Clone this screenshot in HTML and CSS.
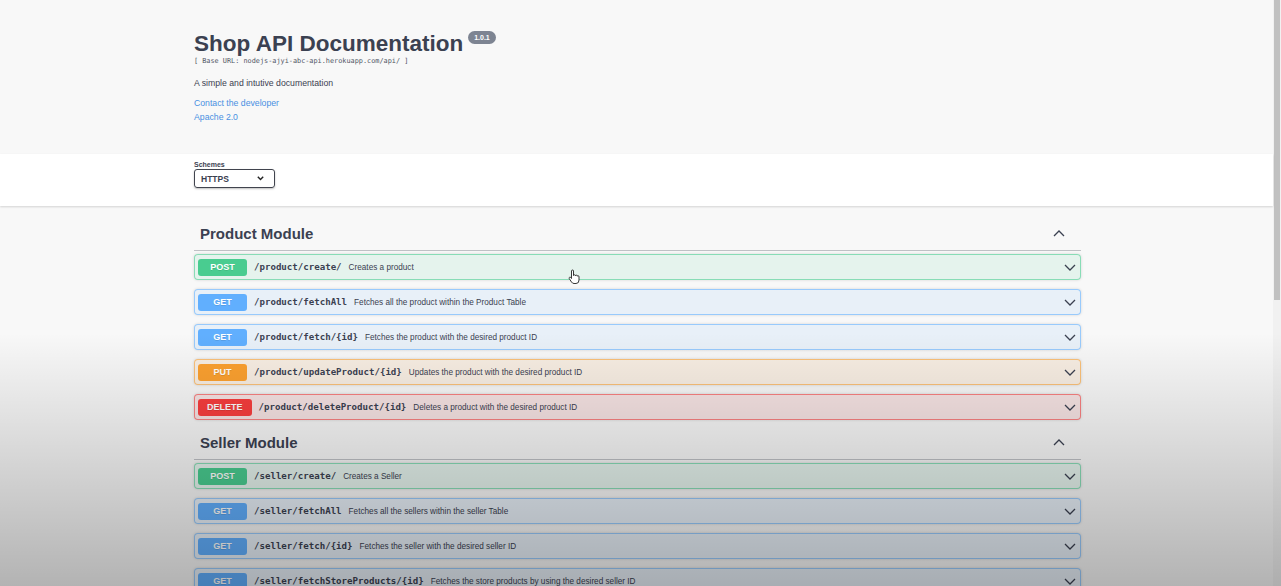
FILE: index.html
```html
<!DOCTYPE html>
<html>
<head>
<meta charset="utf-8">
<link rel="stylesheet" href="styles.css">
</head>
<body>
<div class="page">
  <section class="info">
    <div class="wrap">
      <h1 class="title">Shop API Documentation<span class="version">1.0.1</span></h1>
      <div class="base">[ Base URL: nodejs-ajyi-abc-api.herokuapp.com/api/ ]</div>
      <p class="desc">A simple and intutive documentation</p>
      <a class="link first">Contact the developer</a>
      <a class="link">Apache 2.0</a>
    </div>
  </section>

  <section class="schemes">
    <div class="wrap">
      <div class="schemes-label">Schemes</div>
      <div class="select"><span>HTTPS</span>
        <svg class="sel-chev" width="7" height="5" viewBox="0 0 7 5"><polyline points="0.8,0.8 3.5,3.6 6.2,0.8" fill="none" stroke="#222" stroke-width="1.4"/></svg>
      </div>
    </div>
  </section>

  <main class="content">
    <div class="wrap">
      <div class="tag">
        <h2>Product Module</h2>
        <svg class="chev" width="12" height="7" viewBox="0 0 12 7"><polyline points="1,6 6,1 11,6" fill="none" stroke="#3b4151" stroke-width="1.3"/></svg>
      </div>
      <div class="ops">
        <div class="op post"><span class="method">POST</span><span class="path">/product/create/</span><span class="summary">Creates a product</span><svg class="chev down" width="12" height="7" viewBox="0 0 12 7"><polyline points="1,1 6,6 11,1" fill="none" stroke="#3b4151" stroke-width="1.3"/></svg></div>
        <div class="op get"><span class="method">GET</span><span class="path">/product/fetchAll</span><span class="summary">Fetches all the product within the Product Table</span><svg class="chev down" width="12" height="7" viewBox="0 0 12 7"><polyline points="1,1 6,6 11,1" fill="none" stroke="#3b4151" stroke-width="1.3"/></svg></div>
        <div class="op get"><span class="method">GET</span><span class="path">/product/fetch/{id}</span><span class="summary">Fetches the product with the desired product ID</span><svg class="chev down" width="12" height="7" viewBox="0 0 12 7"><polyline points="1,1 6,6 11,1" fill="none" stroke="#3b4151" stroke-width="1.3"/></svg></div>
        <div class="op put"><span class="method">PUT</span><span class="path">/product/updateProduct/{id}</span><span class="summary">Updates the product with the desired product ID</span><svg class="chev down" width="12" height="7" viewBox="0 0 12 7"><polyline points="1,1 6,6 11,1" fill="none" stroke="#3b4151" stroke-width="1.3"/></svg></div>
        <div class="op delete"><span class="method">DELETE</span><span class="path">/product/deleteProduct/{id}</span><span class="summary">Deletes a product with the desired product ID</span><svg class="chev down" width="12" height="7" viewBox="0 0 12 7"><polyline points="1,1 6,6 11,1" fill="none" stroke="#3b4151" stroke-width="1.3"/></svg></div>
      </div>

      <div class="tag">
        <h2>Seller Module</h2>
        <svg class="chev" width="12" height="7" viewBox="0 0 12 7"><polyline points="1,6 6,1 11,6" fill="none" stroke="#3b4151" stroke-width="1.3"/></svg>
      </div>
      <div class="ops">
        <div class="op post"><span class="method">POST</span><span class="path">/seller/create/</span><span class="summary">Creates a Seller</span><svg class="chev down" width="12" height="7" viewBox="0 0 12 7"><polyline points="1,1 6,6 11,1" fill="none" stroke="#3b4151" stroke-width="1.3"/></svg></div>
        <div class="op get"><span class="method">GET</span><span class="path">/seller/fetchAll</span><span class="summary">Fetches all the sellers within the seller Table</span><svg class="chev down" width="12" height="7" viewBox="0 0 12 7"><polyline points="1,1 6,6 11,1" fill="none" stroke="#3b4151" stroke-width="1.3"/></svg></div>
        <div class="op get"><span class="method">GET</span><span class="path">/seller/fetch/{id}</span><span class="summary">Fetches the seller with the desired seller ID</span><svg class="chev down" width="12" height="7" viewBox="0 0 12 7"><polyline points="1,1 6,6 11,1" fill="none" stroke="#3b4151" stroke-width="1.3"/></svg></div>
        <div class="op get"><span class="method">GET</span><span class="path">/seller/fetchStoreProducts/{id}</span><span class="summary">Fetches the store products by using the desired seller ID</span><svg class="chev down" width="12" height="7" viewBox="0 0 12 7"><polyline points="1,1 6,6 11,1" fill="none" stroke="#3b4151" stroke-width="1.3"/></svg></div>
      </div>
    </div>
  </main>
</div>
<div class="scrollbar"><div class="thumb"></div></div>
<div class="shade"></div>
<svg class="cursor" width="12" height="16" viewBox="0 0 12 16"><path d="M3.5 2 Q3.5 1 4.5 1 Q5.5 1 5.5 2 V6.5 Q5.5 5.8 6.5 5.8 Q7.5 5.8 7.5 6.8 Q7.5 6.2 8.5 6.2 Q9.5 6.2 9.5 7.2 Q9.5 6.8 10.3 6.8 Q11 6.8 11 7.8 V11 Q11 14.5 8 14.5 H6 Q4.5 14.5 3.5 13 L1.2 9.5 Q0.8 8.6 1.6 8.3 Q2.4 8 3 8.8 L3.5 9.5 Z" fill="#fff" stroke="#222" stroke-width="0.9"/></svg>
</body>
</html>
```

FILE: styles.css
```css
* { box-sizing: border-box; }
body {
  margin: 0;
  height: 586px;
  overflow: hidden;
  position: relative;
  display: flex;
  background: #f8f8f8;
  font-family: "Liberation Sans", Arial, sans-serif;
  color: #3b4151;
}
.page { flex: 1; }
.wrap { width: 887px; margin-left: 194px; }

.info { height: 154px; padding-top: 29px; }
.title {
  margin: 0;
  font-size: 22.5px;
  line-height: 29px;
  font-weight: 700;
  display: flex;
  align-items: flex-start;
}
.version {
  margin: 2px 0 0 5px;
  height: 13px;
  padding: 0 6px;
  border-radius: 57px;
  background: #7d8492;
  color: #fff;
  font-size: 7px;
  line-height: 13px;
  font-weight: 700;
}
.base {
  font-family: "DejaVu Sans Mono", "Liberation Mono", monospace;
  font-size: 6.85px;
  line-height: 8px;
  margin-top: -1px;
  color: #505665;
}
.desc { margin: 12px 0 0; font-size: 8.7px; line-height: 12px; }
.link { display: block; color: #4990e2; font-size: 8.7px; line-height: 12px; margin-top: 2px; }
.link.first { margin-top: 8px; }

.schemes {
  height: 52px;
  background: #fff;
  box-shadow: 0 1px 2px 0 rgba(0,0,0,.15);
  padding-top: 7px;
  position: relative;
}
.schemes-label { font-size: 7px; line-height: 8px; font-weight: 700; color: #3b4151; }
.select {
  width: 81px;
  height: 19px;
  border: 1.5px solid #41444e;
  border-radius: 3px;
  box-shadow: 0 1px 2px 0 rgba(0,0,0,.25);
  display: flex;
  align-items: center;
  justify-content: space-between;
  padding: 0 10px 0 6px;
  font-size: 8.5px;
  font-weight: 700;
  color: #3b4151;
}

.content { padding-top: 14px; }
.tag {
  height: 31px;
  border-bottom: 1px solid rgba(59,65,81,.3);
  display: flex;
  align-items: center;
  justify-content: space-between;
  padding: 0 16px 3px 6px;
}
.tag h2 { margin: 0; font-size: 15px; font-weight: 700; }
.ops { margin-top: 3px; }
.op {
  height: 26px;
  border: 1px solid;
  border-radius: 4px;
  padding: 0 3px;
  display: flex;
  align-items: center;
  margin-bottom: 9px;
  box-shadow: 0 0 3px rgba(0,0,0,.15);
}
.method {
  min-width: 49px;
  height: 17px;
  padding: 0 9px;
  border-radius: 3px;
  color: #fff;
  font-size: 9px;
  font-weight: 700;
  line-height: 17px;
  text-align: center;
  text-shadow: 0 1px 0 rgba(0,0,0,.1);
}
.path {
  margin-left: 7px;
  font-family: "DejaVu Sans Mono", "Liberation Mono", monospace;
  font-size: 9.1px;
  font-weight: 700;
  color: #3b4151;
}
.summary { margin-left: 7px; font-size: 8.2px; color: #3b4151; flex: 1; }
.chev.down { margin-right: 1px; }

.post { background: rgba(73,204,144,.1); border-color: rgba(73,204,144,.6); }
.post .method { background: #49cc90; }
.get { background: rgba(97,175,254,.1); border-color: rgba(97,175,254,.6); }
.get .method { background: #61affe; }
.put { background: rgba(252,161,48,.1); border-color: rgba(252,161,48,.6); }
.put .method { background: #fca130; }
.delete { background: rgba(249,62,62,.1); border-color: rgba(249,62,62,.6); }
.delete .method { background: #f93e3e; }

.scrollbar { width: 8px; background: #f1f1f1; }
.thumb { margin-left: 1px; width: 6px; height: 300px; background: #c1c1c1; }

.shade {
  position: absolute;
  left: 0; right: 0; top: 333px; bottom: 0;
  background: linear-gradient(rgba(0,0,0,0), rgba(0,0,0,.28));
  pointer-events: none;
}
.cursor { position: absolute; left: 568px; top: 269px; }
```
